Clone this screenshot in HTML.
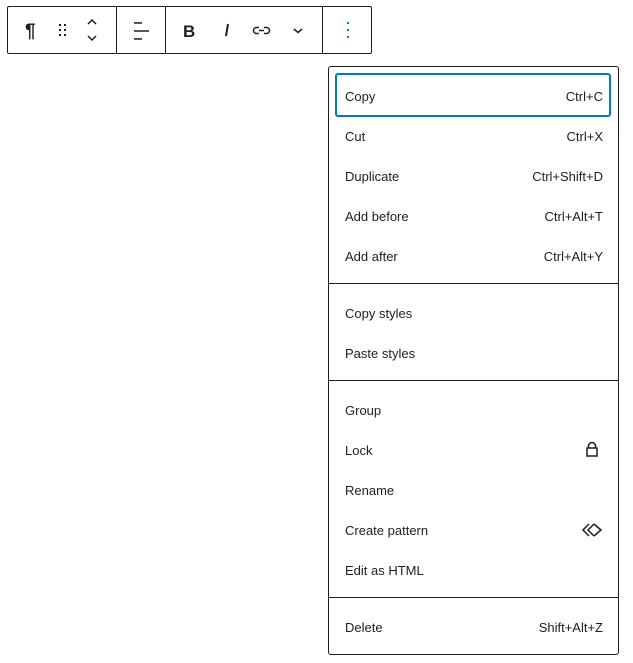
<!DOCTYPE html><html><head><style>
body{margin:0;width:633px;height:663px;background:#fff;font-family:"Liberation Sans",sans-serif;font-size:13px;color:#1e1e1e;position:relative;overflow:hidden}
.tb{position:absolute;left:7px;top:6px;width:363px;height:46px;border:1px solid #1e1e1e;border-radius:2px}
.dv{position:absolute;top:0;width:1px;height:46px;background:#1e1e1e}
.ic{position:absolute}
.menu{position:absolute;left:328px;top:66px;width:289px;height:587px;border:1px solid #1e1e1e;border-radius:3px}
.it{position:absolute;left:16px;width:258px;height:20px;line-height:20px}
.it span{position:absolute;right:0}
.sep{position:absolute;left:0;width:289px;height:1px;background:#1e1e1e}
.focus{position:absolute;left:6px;top:6px;width:272px;height:40px;border:2px solid #007cba;border-radius:3px}
</style></head><body>
<div class="tb">
<div class="dv" style="left:108px"></div><div class="dv" style="left:157px"></div><div class="dv" style="left:314px"></div>
<svg class="ic" style="left:0;top:0" width="363" height="46" fill="none" stroke="#1e1e1e">
<text x="17" y="30" font-size="19" font-weight="bold" fill="#1e1e1e" stroke="none" font-family="Liberation Sans">¶</text>
<g fill="#1e1e1e" stroke="none"><rect x="51" y="17" width="2" height="2"/><rect x="56" y="17" width="2" height="2"/><rect x="51" y="22" width="2" height="2"/><rect x="56" y="22" width="2" height="2"/><rect x="51" y="27" width="2" height="2"/><rect x="56" y="27" width="2" height="2"/></g>
<path d="M80 17l4-4 4 4M80 29l4 4 4-4" stroke-width="1.5"/>
<path d="M126 16h8M126 24h15M126 32h8" stroke-width="1.5"/>
<text x="175" y="30" font-size="17" font-weight="bold" fill="#1e1e1e" stroke="none">B</text>
<path d="M220 17l-2 12" stroke-width="2"/>
<path d="M251 20.5h-2.5a3 3 0 0 0 0 6h2.5M256 20.5h2.5a3 3 0 0 1 0 6h-2.5M251 23.5h5" stroke-width="1.5"/>
<path d="M286 22l4 3.5 4-3.5" stroke-width="1.5"/>
<g fill="#007cba" stroke="none"><rect x="339" y="15" width="2" height="2"/><rect x="339" y="22" width="2" height="2"/><rect x="339" y="29" width="2" height="2"/></g>
</svg></div>
<div class="menu">
<div class="focus"></div>
<div class="it" style="top:20px">Copy<span>Ctrl+C</span></div>
<div class="it" style="top:60px">Cut<span>Ctrl+X</span></div>
<div class="it" style="top:100px">Duplicate<span>Ctrl+Shift+D</span></div>
<div class="it" style="top:140px">Add before<span>Ctrl+Alt+T</span></div>
<div class="it" style="top:180px">Add after<span>Ctrl+Alt+Y</span></div>
<div class="sep" style="top:216px"></div>
<div class="it" style="top:237px">Copy styles</div>
<div class="it" style="top:277px">Paste styles</div>
<div class="sep" style="top:313px"></div>
<div class="it" style="top:334px">Group</div>
<div class="it" style="top:374px">Lock</div>
<div class="it" style="top:414px">Rename</div>
<div class="it" style="top:454px">Create pattern</div>
<div class="it" style="top:494px">Edit as HTML</div>
<div class="sep" style="top:530px"></div>
<div class="it" style="top:551px">Delete<span>Shift+Alt+Z</span></div>
<svg class="ic" style="left:250px;top:370px" width="30" height="110" fill="none" stroke="#1e1e1e" stroke-width="1.5">
<rect x="8" y="11" width="10" height="8"/><path d="M9.5 11V9a3.5 3.5 0 0 1 7 0v2"/>
<path d="M10 87l-6 6 6 6M15 87l-6 6 6 6M15 87l7 6-7 6"/>
</svg>
</div>
</body></html>
